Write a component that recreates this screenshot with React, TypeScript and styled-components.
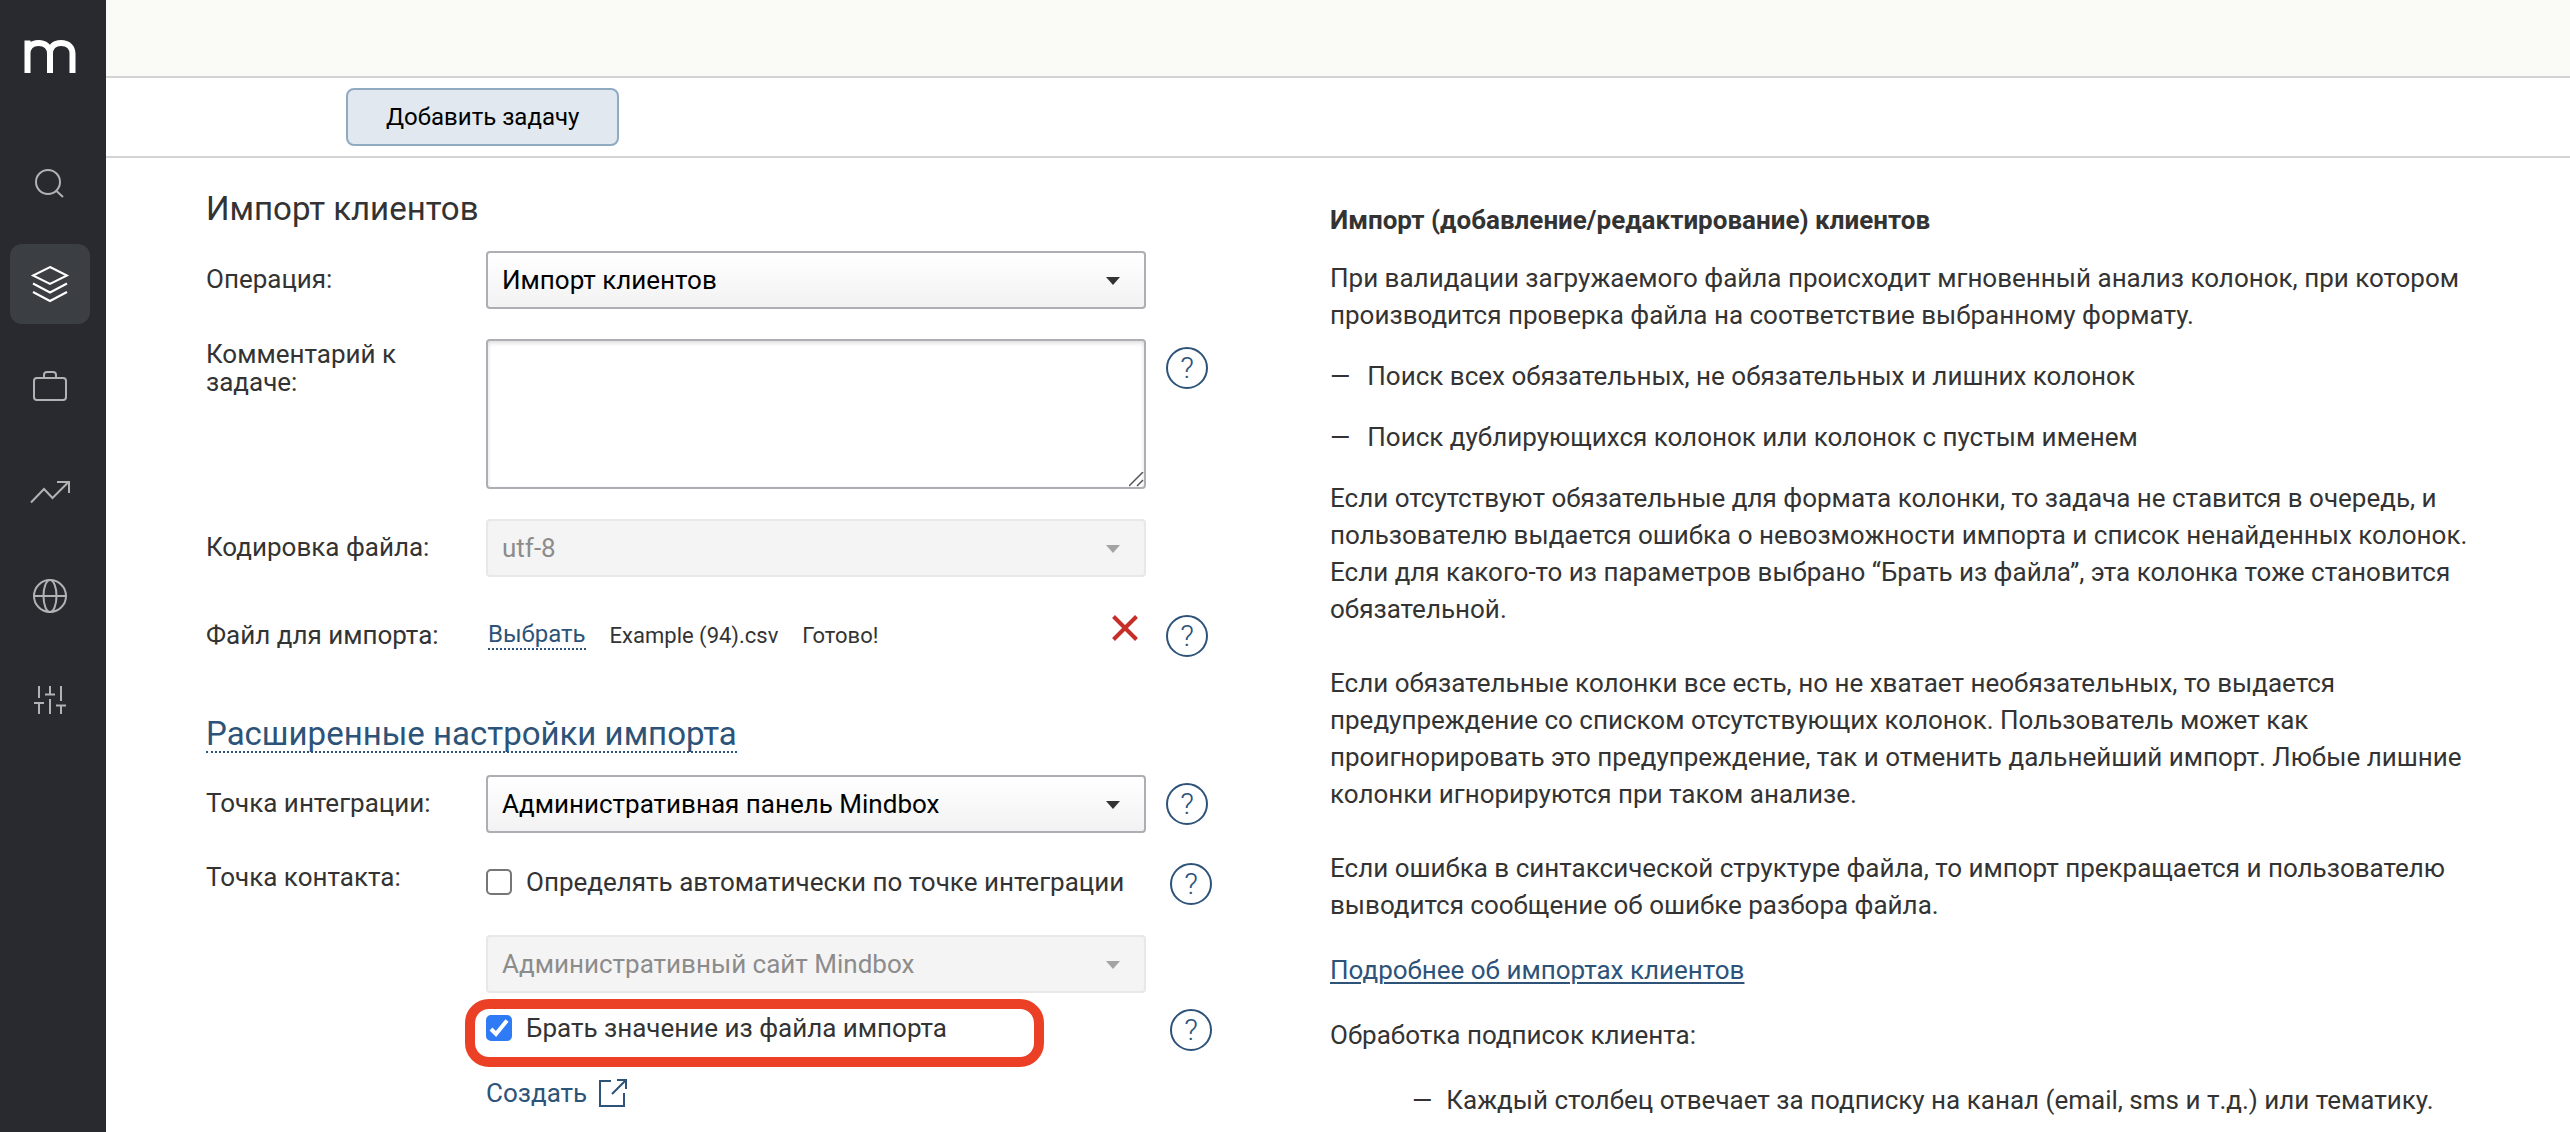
import React, { useState } from "react";
import styled, { createGlobalStyle, css } from "styled-components";

const color = {
  text: "#333333",
  link: "#2d5379",
  line: "#d3d3d3",
  control: "#adadb3",
  sidebar: "#292a2f",
  accent: "#2f7bf6",
  highlight: "#eb4026",
  danger: "#c62f27",
};

const GlobalStyle = createGlobalStyle`
  *, *::before, *::after { box-sizing: border-box; }
  body {
    margin: 0;
    background: #fff;
    color: ${color.text};
    font: 400 26px/28px Roboto, "Noto Sans", sans-serif;
  }
  button, select, textarea, input { font: inherit; }
`;

const Page = styled.div`
  display: flex;
  min-height: 100vh;
`;

const Sidebar = styled.nav`
  flex: none;
  width: 106px;
  padding: 36px 10px;
  background: ${color.sidebar};
`;

const Logo = styled.a`
  display: flex;
  height: 80px;
  margin: 0 0 24px;
  padding-left: 12px;
  color: #fff;
`;

const NavList = styled.ul`
  display: grid;
  gap: 24px;
  margin: 0;
  padding: 0;
  list-style: none;
`;

const NavButton = styled.button<{ $active?: boolean }>`
  display: grid;
  place-items: center;
  width: 80px;
  height: 80px;
  padding: 0;
  border: 0;
  border-radius: 12px;
  background: ${(p) => (p.$active ? "#3b3e43" : "transparent")};
  color: ${(p) => (p.$active ? "#fff" : "#b2b2b5")};
  cursor: pointer;
`;

const Main = styled.main`
  flex: 1;
  min-width: 0;
`;

const TopBar = styled.header`
  height: 78px;
  border-bottom: 2px solid ${color.line};
  background: #fafbf7;
`;

const Toolbar = styled.div`
  padding: 10px 240px;
  border-bottom: 2px solid ${color.line};
`;

const AddButton = styled.button`
  display: block;
  height: 58px;
  padding: 0 38px;
  border: 2px solid #8fabc2;
  border-radius: 8px;
  background: #e1e8ef;
  color: #000;
  font-size: 24px;
  cursor: pointer;
`;

const Content = styled.div`
  display: grid;
  grid-template-columns: minmax(0, 1124fr) minmax(0, 1140fr);
  padding: 0 100px;
`;

const Form = styled.form`
  padding: 31px 122px 0 0;
`;

const Title = styled.h1`
  margin: 0 0 22px;
  font-size: 33px;
  font-weight: 400;
  line-height: 40px;
`;

const dashed = css`
  border: 0;
  border-bottom: 2px dotted ${color.link};
  padding: 0;
  background: none;
  color: ${color.link};
  cursor: pointer;
`;

const SectionToggle = styled.button`
  ${dashed}
  display: block;
  margin: 60px 0 22px;
  font-size: 33px;
  line-height: 34px;
`;

const Row = styled.div<{ $gap?: number }>`
  display: grid;
  grid-template-columns: 280px minmax(0, 1fr);
  align-items: start;
  margin-top: ${(p) => p.$gap ?? 30}px;
`;

const Label = styled.label<{ $top?: number }>`
  padding: ${(p) => p.$top ?? 14}px 30px 0 0;
`;

const Line = styled.div<{ $gap?: number }>`
  display: grid;
  grid-template-columns: minmax(0, 1fr) 42px;
  gap: 20px;
  align-items: start;
  margin-top: ${(p) => p.$gap ?? 0}px;
`;

const SelectBox = styled.div`
  position: relative;
  svg {
    position: absolute;
    top: 26px;
    right: 26px;
    pointer-events: none;
  }
`;

const SelectControl = styled.select`
  display: block;
  width: 100%;
  height: 58px;
  padding: 0 60px 0 14px;
  border: 2px solid ${color.control};
  border-radius: 4px;
  background: linear-gradient(#fff, #f2f2f2);
  color: #000;
  appearance: none;
  & + svg { color: ${color.text}; }
  &:disabled {
    border-color: #e8e8e8;
    background: #f4f4f4;
    color: #8c8c8c;
    opacity: 1;
  }
  &:disabled + svg { color: #a3a3a3; }
`;

const Comment = styled.textarea`
  display: block;
  width: 100%;
  height: 150px;
  padding: 12px 14px;
  border: 2px solid ${color.control};
  border-radius: 4px;
  box-shadow: inset 0 2px 4px rgba(0, 0, 0, 0.14);
  resize: vertical;
  &::-webkit-resizer {
    background: url("data:image/svg+xml,%3Csvg xmlns='http://www.w3.org/2000/svg' viewBox='0 0 15 15'%3E%3Cpath d='M0 14L14 0M8 14l6-6' stroke='%23555' stroke-width='1.5' fill='none'/%3E%3C/svg%3E") 0 0 / 15px 15px no-repeat;
  }
`;

const HelpButton = styled.button<{ $top?: number }>`
  width: 42px;
  height: 42px;
  margin-top: ${(p) => p.$top ?? 0}px;
  padding: 0;
  border: 2px solid ${color.link};
  border-radius: 50%;
  background: none;
  color: ${color.link};
  font-size: 30px;
  font-weight: 300;
  line-height: 36px;
  cursor: pointer;
`;

const FileLine = styled.div`
  display: flex;
  align-items: flex-start;
  padding: 0 8px 0 2px;
`;

const ChooseFile = styled.button`
  ${dashed}
  margin: 5px 24px 0 0;
  font-size: 24px;
  line-height: 28px;
`;

const FileText = styled.span`
  margin-right: 24px;
  padding-top: 7px;
  font-size: 22px;
`;

const RemoveButton = styled.button`
  margin-left: auto;
  padding: 0;
  border: 0;
  background: none;
  color: ${color.danger};
  line-height: 0;
  cursor: pointer;
`;

const CheckLine = styled(Line)`
  position: relative;
  gap: 24px;
  margin-right: -4px;
`;

const CheckLabel = styled.label`
  display: flex;
  align-items: center;
  gap: 14px;
  height: 38px;
  white-space: nowrap;
`;

const CheckBox = styled.span`
  position: relative;
  width: 26px;
  height: 26px;
  svg {
    position: absolute;
    top: 0;
    left: 0;
    pointer-events: none;
  }
`;

const CheckInput = styled.input`
  display: block;
  width: 26px;
  height: 26px;
  margin: 0;
  border: 2px solid #767676;
  border-radius: 5px;
  background: #fff;
  appearance: none;
  &:checked {
    border-color: ${color.accent};
    background: ${color.accent};
  }
  & + svg { display: none; }
  &:checked + svg { display: block; }
`;

const Highlight = styled.span`
  position: absolute;
  top: -10px;
  left: -21px;
  width: 579px;
  height: 68px;
  border: 10px solid ${color.highlight};
  border-radius: 24px;
  pointer-events: none;
`;

const CreateLink = styled.a`
  display: inline-flex;
  align-items: center;
  gap: 12px;
  margin-top: 28px;
  color: ${color.link};
  text-decoration: none;
`;

const Article = styled.article`
  padding-top: 44px;
  line-height: 37px;
`;

const ArticleTitle = styled.h2`
  margin: 0 0 21px;
  font-size: 26px;
  font-weight: 700;
`;

const Paragraph = styled.p<{ $after?: number }>`
  margin: 0 0 ${(p) => p.$after ?? 24}px;
`;

const ArticleLink = styled.a`
  color: ${color.link};
  text-decoration: underline;
  text-decoration-thickness: 2px;
  text-underline-offset: 3px;
`;

const DashList = styled.ul<{ $indent?: number }>`
  margin: 0;
  padding: 0 0 0 ${(p) => p.$indent ?? 0}px;
  list-style: none;
`;

const DashItem = styled.li<{ $gap: number }>`
  display: flex;
  gap: ${(p) => p.$gap}px;
  margin-bottom: 24px;
  &::before {
    content: "—";
  }
`;

const Stroke = ({ size = 40, width = 2, children }: { size?: number; width?: number; children: React.ReactNode }) => (
  <svg width={size} height={size} viewBox={`0 0 ${size} ${size}`} fill="none" stroke="currentColor" strokeWidth={width} aria-hidden="true">
    {children}
  </svg>
);

const navItems = [
  {
    name: "Поиск",
    icon: (
      <>
        <circle cx="18" cy="22" r="12" />
        <path d="M26.500 31l6.500 6" />
      </>
    ),
  },
  {
    name: "Данные",
    active: true,
    icon: <path d="M20 3L37 11.500 20 20 3 11.500zM3 19.500l17 9 17-9M3 28l17 9 17-9" />,
  },
  {
    name: "Кампании",
    icon: (
      <>
        <rect x="4" y="10" width="32" height="22" rx="3" />
        <path d="M14 10V7a3 3 0 0 1 3-3h6a3 3 0 0 1 3 3v3" />
      </>
    ),
  },
  {
    name: "Отчёты",
    icon: <path d="M1 30.500L14 17l8.500 9L38.500 10M27 10h12v11" />,
  },
  {
    name: "Сайт",
    icon: (
      <>
        <circle cx="20" cy="20" r="16" />
        <ellipse cx="20" cy="20" rx="6.500" ry="16" />
        <path d="M4 20h32" />
      </>
    ),
  },
  {
    name: "Настройки",
    icon: <path d="M9 6v12M9 23v11M4 23h10M20 6v8M15 14.500h10M20 19v15M31 6v15M31 25.500V34M26 25.500h10" />,
  },
];

const Select = ({ id, value, disabled }: { id: string; value: string; disabled?: boolean }) => (
  <SelectBox>
    <SelectControl id={id} disabled={disabled} defaultValue={value}>
      <option>{value}</option>
    </SelectControl>
    <svg width="14" height="8" viewBox="0 0 14 8" fill="currentColor" aria-hidden="true">
      <path d="M0 0h14L7 8z" />
    </svg>
  </SelectBox>
);

const Help = ({ top }: { top?: number }) => (
  <HelpButton type="button" $top={top}>
    ?
  </HelpButton>
);

const Check = ({ label, initial = false }: { label: string; initial?: boolean }) => {
  const [checked, setChecked] = useState(initial);
  return (
    <CheckLabel>
      <CheckBox>
        <CheckInput type="checkbox" checked={checked} onChange={(e) => setChecked(e.target.checked)} />
        <svg width="26" height="26" viewBox="0 0 26 26" fill="none" stroke="#fff" strokeWidth="4" aria-hidden="true">
          <path d="M5 14l5 5L21 5.500" />
        </svg>
      </CheckBox>
      {label}
    </CheckLabel>
  );
};

export default function App() {
  return (
    <Page>
      <GlobalStyle />
      <Sidebar>
        <Logo href="#" aria-label="Mindbox">
          <svg width="56" height="40" viewBox="0 0 56 40" fill="none" stroke="currentColor" strokeWidth="6" aria-hidden="true">
            <path d="M5.500 37V4.500M5.500 18c0-7 4-11 11-11s11.500 4 11.500 11v19M28 18c0-7 4-11 11-11s11.500 4 11.500 11v19" />
          </svg>
        </Logo>
        <NavList>
          {navItems.map((item) => (
            <li key={item.name}>
              <NavButton type="button" $active={item.active} aria-label={item.name}>
                <Stroke>{item.icon}</Stroke>
              </NavButton>
            </li>
          ))}
        </NavList>
      </Sidebar>
      <Main>
        <TopBar />
        <Toolbar>
          <AddButton type="button">Добавить задачу</AddButton>
        </Toolbar>
        <Content>
          <Form>
            <Title>Импорт клиентов</Title>
            <Row $gap={0}>
              <Label htmlFor="operation">Операция:</Label>
              <Line>
                <Select id="operation" value="Импорт клиентов" />
              </Line>
            </Row>
            <Row>
              <Label htmlFor="comment" $top={1}>Комментарий к задаче:</Label>
              <Line>
                <Comment id="comment" />
                <Help top={8} />
              </Line>
            </Row>
            <Row>
              <Label htmlFor="encoding">Кодировка файла:</Label>
              <Line>
                <Select id="encoding" value="utf-8" disabled />
              </Line>
            </Row>
            <Row $gap={38}>
              <Label htmlFor="file" $top={6}>Файл для импорта:</Label>
              <Line>
                <FileLine>
                  <ChooseFile id="file" type="button">Выбрать</ChooseFile>
                  <FileText>Example (94).csv</FileText>
                  <FileText>Готово!</FileText>
                  <RemoveButton type="button" aria-label="Удалить файл">
                    <Stroke size={26} width={4}>
                      <path d="M1.500 1.500l23 23M24.500 1.500l-23 23" />
                    </Stroke>
                  </RemoveButton>
                </FileLine>
                <Help />
              </Line>
            </Row>
            <SectionToggle type="button">Расширенные настройки импорта</SectionToggle>
            <Row $gap={0}>
              <Label htmlFor="integration">Точка интеграции:</Label>
              <Line>
                <Select id="integration" value="Административная панель Mindbox" />
                <Help top={8} />
              </Line>
            </Row>
            <Row>
              <Label htmlFor="contact" $top={0}>Точка контакта:</Label>
              <div>
                <CheckLine>
                  <Check label="Определять автоматически по точке интеграции" />
                  <Help />
                </CheckLine>
                <Line $gap={30}>
                  <Select id="contact" value="Административный сайт Mindbox" disabled />
                </Line>
                <CheckLine $gap={16}>
                  <Check label="Брать значение из файла импорта" initial />
                  <Help />
                  <Highlight />
                </CheckLine>
                <CreateLink href="#">
                  Создать
                  <Stroke size={28}>
                    <path d="M12 2H1v25h24V14M18 1h9v9M27 1L13 15" />
                  </Stroke>
                </CreateLink>
              </div>
            </Row>
          </Form>
          <Article>
            <ArticleTitle>Импорт (добавление/редактирование) клиентов</ArticleTitle>
            <Paragraph>
              При валидации загружаемого файла происходит мгновенный анализ колонок, при котором производится проверка файла на соответствие выбранному формату.
            </Paragraph>
            <DashList>
              <DashItem $gap={17}>Поиск всех обязательных, не обязательных и лишних колонок</DashItem>
              <DashItem $gap={17}>Поиск дублирующихся колонок или колонок с пустым именем</DashItem>
            </DashList>
            <Paragraph $after={37}>
              Если отсутствуют обязательные для формата колонки, то задача не ставится в очередь, и пользователю выдается ошибка о невозможности импорта и список ненайденных колонок. Если для какого-то из параметров выбрано “Брать из файла”, эта колонка тоже становится обязательной.
            </Paragraph>
            <Paragraph $after={37}>
              Если обязательные колонки все есть, но не хватает необязательных, то выдается предупреждение со списком отсутствующих колонок. Пользователь может как проигнорировать это предупреждение, так и отменить дальнейший импорт. Любые лишние колонки игнорируются при таком анализе.
            </Paragraph>
            <Paragraph $after={28}>
              Если ошибка в синтаксической структуре файла, то импорт прекращается и пользователю выводится сообщение об ошибке разбора файла.
            </Paragraph>
            <Paragraph $after={28}>
              <ArticleLink href="#">Подробнее об импортах клиентов</ArticleLink>
            </Paragraph>
            <Paragraph $after={28}>Обработка подписок клиента:</Paragraph>
            <DashList $indent={82}>
              <DashItem $gap={14}>Каждый столбец отвечает за подписку на канал (email, sms и т.д.) или тематику.</DashItem>
            </DashList>
          </Article>
        </Content>
      </Main>
    </Page>
  );
}
